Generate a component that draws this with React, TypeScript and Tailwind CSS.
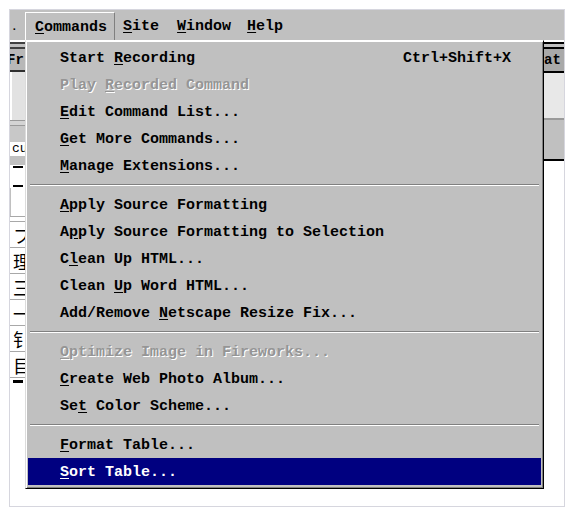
type Item = {
  pre: string;
  key: string;
  post: string;
  shortcut?: string;
  disabled?: boolean;
  active?: boolean;
};

const groups: Item[][] = [
  [
    { pre: 'Start ', key: 'R', post: 'ecording', shortcut: 'Ctrl+Shift+X' },
    { pre: 'Play ', key: 'R', post: 'ecorded Command', disabled: true },
    { pre: '', key: 'E', post: 'dit Command List...' },
    { pre: '', key: 'G', post: 'et More Commands...' },
    { pre: '', key: 'M', post: 'anage Extensions...' },
  ],
  [
    { pre: '', key: 'A', post: 'pply Source Formatting' },
    { pre: 'A', key: 'p', post: 'ply Source Formatting to Selection' },
    { pre: 'C', key: 'l', post: 'ean Up HTML...' },
    { pre: 'Clean ', key: 'U', post: 'p Word HTML...' },
    { pre: 'Add/Remove ', key: 'N', post: 'etscape Resize Fix...' },
  ],
  [
    { pre: '', key: 'O', post: 'ptimize Image in Fireworks...', disabled: true },
    { pre: '', key: 'C', post: 'reate Web Photo Album...' },
    { pre: 'Se', key: 't', post: ' Color Scheme...' },
  ],
  [
    { pre: '', key: 'F', post: 'ormat Table...' },
    { pre: '', key: 'S', post: 'ort Table...', active: true },
  ],
];

function MenuRow({ item }: { item: Item }) {
  const tone = item.active
    ? 'bg-[#000080] text-white'
    : item.disabled
      ? 'text-[#959595] [text-shadow:1px_1px_0_#fff]'
      : 'text-black';
  return (
    <div className={`h-[27px] flex items-center justify-between pt-[3px] pl-[32px] pr-[30px] whitespace-pre ${tone}`}>
      <span>
        {item.pre}
        <u className="underline-offset-2">{item.key}</u>
        {item.post}
      </span>
      {item.shortcut && <span>{item.shortcut}</span>}
    </div>
  );
}

function Separator() {
  return (
    <div className="h-[12px] flex items-center px-[2px]">
      <div className="w-full h-[2px] border-t border-t-[#808080] border-b border-b-white" />
    </div>
  );
}

function TopMenu({ pre, k, post, open }: { pre?: string; k: string; post: string; open?: boolean }) {
  return (
    <div
      className={`h-[28px] flex items-center pt-[3px] whitespace-pre ${
        open ? 'pl-[9px] pr-[7px] border-t border-l border-white border-r border-r-[#808080]' : 'px-[8px]'
      }`}
    >
      {pre}
      <u className="underline-offset-2">{k}</u>
      {post}
    </div>
  );
}

export default function App() {
  return (
    <div className="w-[570px] h-[512px] bg-white pt-[9px] pl-[9px] font-['Liberation_Mono',monospace] text-[15px] font-bold text-black">
      <div className="relative w-[556px] h-[498px] border border-[#d6d6de] flex flex-col">
        {/* menu bar */}
        <div className="h-[30px] bg-[#c0c0c0] flex items-end">
          <div className="w-[15px] h-[28px] flex items-center pl-[1px] pt-[3px] text-[11px]">.</div>
          <TopMenu k="C" post="ommands" open />
          <TopMenu k="S" post="ite" />
          <div className="w-[2px]" />
          <TopMenu k="W" post="indow" />
          <TopMenu k="H" post="elp" />
        </div>

        {/* window underneath */}
        <div className="flex-1 flex justify-between">
          <div className="w-[15px] flex flex-col overflow-hidden">
            <div className="h-[7px] border-t-2 border-b-2 border-[#404040] mt-[2px] bg-[#c0c0c0]" />
            <div className="h-[23px] bg-[#b8b8b8] border-b-2 border-[#303030] text-[14px] leading-[23px] -ml-[3px]">Fr</div>
            <div className="h-[48px] bg-[#e2e2e2] border-l-2 border-white" />
            <div className="h-[6px] border-t border-b border-[#9a9a9a] bg-[#d4d4d4]" />
            <div className="h-[16px] bg-[#c8c8c8]" />
            <div className="h-[14px] bg-white text-[13px] leading-[14px] pl-[2px] font-normal">cu</div>
            <div className="h-[9px] bg-[#c0c0c0]" />
            <div className="h-[4px] flex items-center pl-[3px]"><div className="w-[10px] h-[2px] bg-black" /></div>
            <div className="h-[15px] bg-white" />
            <div className="h-[4px] flex items-center pl-[3px]"><div className="w-[10px] h-[2px] bg-black" /></div>
            <div className="h-[28px] bg-white border-l border-[#c0c0c0]" />
            <div className="h-[6px] border-t border-b border-[#a8a8a8]" />
            {['フ', '理', '三', '一', '钅', '目'].map((c, i) => (
              <div
                key={i}
                className="h-[26px] border-b border-[#a8a8a8] flex items-center justify-start pl-[3px] overflow-hidden font-['Noto_Sans_CJK_SC',sans-serif] font-normal text-[18px] leading-none"
              >
                {c}
              </div>
            ))}
            <div className="h-[3px] bg-black w-[10px] ml-[3px] mt-[2px]" />
          </div>

          <div className="w-[20px] flex flex-col overflow-hidden">
            <div className="h-[7px] border-t-2 border-b-2 border-black mt-[2px] bg-[#c0c0c0]" />
            <div className="h-[24px] bg-[#a9a9a9] border-b-2 border-black text-[14px] leading-[22px] whitespace-pre">at</div>
            <div className="h-[47px] bg-[#e8e8e8] border-b-2 border-[#9a9a9a]" />
            <div className="h-[41px] bg-[#c0c0c0] border-b-2 border-black" />
          </div>
        </div>

        {/* Commands dropdown */}
        <div className="absolute left-[15px] top-[30px] w-[519px] h-[449px] bg-[#c0c0c0] border border-t-white border-l-[#dcdcdc] border-r-black border-b-black shadow-[inset_1px_1px_0_#fff,inset_-1px_-1px_0_#808080] pt-[3px] px-[2px]">
          {groups.map((g, gi) => (
            <div key={gi}>
              {gi > 0 && <Separator />}
              {g.map((it, ii) => (
                <MenuRow key={ii} item={it} />
              ))}
            </div>
          ))}
        </div>
      </div>
    </div>
  );
}
